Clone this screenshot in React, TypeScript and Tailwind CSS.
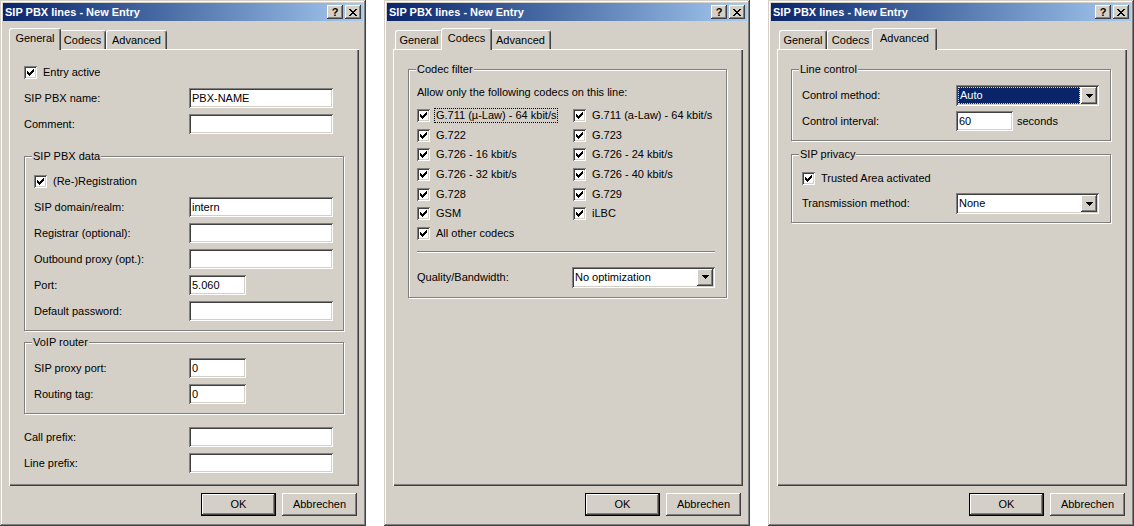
import { ReactNode } from "react";

// Win2000 style 3D edges
const windowEdge =
  "shadow-[inset_-1px_-1px_0_#404040,inset_1px_1px_0_#d4d0c8,inset_-2px_-2px_0_#808080,inset_2px_2px_0_#ffffff]";
const raised =
  "shadow-[inset_-1px_-1px_0_#404040,inset_1px_1px_0_#ffffff,inset_-2px_-2px_0_#808080,inset_2px_2px_0_#d4d0c8]";
const sunken =
  "shadow-[inset_1px_1px_0_#808080,inset_-1px_-1px_0_#ffffff,inset_2px_2px_0_#404040,inset_-2px_-2px_0_#d4d0c8]";
const panelEdge =
  "shadow-[inset_1px_1px_0_#ffffff,inset_-1px_-1px_0_#404040,inset_-2px_-2px_0_#808080]";

function CheckMark() {
  return (
    <svg width="7" height="7" viewBox="0 0 7 7" shapeRendering="crispEdges">
      <path
        d="M6 0h1v1h-1z M5 1h2v1h-2z M0 2h1v1h-1z M4 2h3v1h-3z M0 3h2v1h-2z M3 3h3v1h-3z M0 4h5v1h-5z M1 5h3v1h-3z M2 6h1v1h-1z"
        fill="#000"
      />
    </svg>
  );
}

function Arrow() {
  return (
    <svg width="7" height="4" viewBox="0 0 7 4" shapeRendering="crispEdges">
      <path d="M0 0h7v1h-7z M1 1h5v1h-5z M2 2h3v1h-3z M3 3h1v1h-1z" fill="#000" />
    </svg>
  );
}

function Checkbox({ label, focused }: { label: string; focused?: boolean }) {
  return (
    <div className="flex h-[13px] items-center gap-[6px]">
      <span className={`flex h-[13px] w-[13px] shrink-0 items-center justify-center bg-white ${sunken}`}>
        <CheckMark />
      </span>
      {focused ? (
        <span className="-ml-[2px] border border-dotted border-black px-[1px] leading-[13px]">{label}</span>
      ) : (
        <span className="whitespace-nowrap">{label}</span>
      )}
    </div>
  );
}

function TextBox({ value, width }: { value?: string; width: string }) {
  return (
    <div className={`flex h-[20px] items-center bg-white pl-[3px] ${sunken} ${width}`}>{value}</div>
  );
}

function Combo({ value, selected }: { value: string; selected?: boolean }) {
  return (
    <div className={`flex h-[21px] w-[143px] items-center gap-[1px] bg-white p-[2px] ${sunken}`}>
      {selected ? (
        <div className="flex h-[17px] flex-1 items-center border border-dotted border-[#d4d0c8] bg-[#0a246a] pl-[1px] text-white">
          {value}
        </div>
      ) : (
        <div className="flex-1 pl-[1px]">{value}</div>
      )}
      <div className={`flex h-[17px] w-[16px] items-center justify-center bg-[#d4d0c8] ${raised}`}>
        <Arrow />
      </div>
    </div>
  );
}

function Row({ label, labelW, children }: { label: string; labelW: string; children: ReactNode }) {
  return (
    <div className="flex items-center">
      <span className={`shrink-0 ${labelW}`}>{label}</span>
      {children}
    </div>
  );
}

function Group({ title, className, children }: { title: string; className: string; children: ReactNode }) {
  return (
    <div
      className={`relative flex flex-col border border-[#808080] shadow-[inset_1px_1px_0_#ffffff,1px_1px_0_#ffffff] ${className}`}
    >
      <span className="absolute -top-[7px] left-[7px] bg-[#d4d0c8] px-[1px] leading-[13px]">{title}</span>
      {children}
    </div>
  );
}

const tabs = [
  { name: "General", w: "w-[48px]", sw: "w-[52px]" },
  { name: "Codecs", w: "w-[47px]", sw: "w-[51px]" },
  { name: "Advanced", w: "w-[61px]", sw: "w-[65px]" },
];

function TabStrip({ active }: { active: number }) {
  return (
    <div className="relative z-10 mt-[7px] -mb-[1px] flex h-[22px] items-end pl-[8px]">
      {tabs.map((t, i) =>
        i === active ? (
          <div
            key={t.name}
            className={`relative z-10 -mx-[2px] flex h-[22px] items-center justify-center rounded-t-[3px] border-l border-r border-t border-white border-r-[#404040] bg-[#d4d0c8] pb-[3px] shadow-[inset_-1px_0_0_#808080] ${t.sw}`}
          >
            {t.name}
          </div>
        ) : (
          <div
            key={t.name}
            className={`mb-[1px] flex h-[19px] items-center justify-center rounded-t-[3px] border-l border-r border-t border-white border-r-[#404040] pt-[1px] shadow-[inset_-1px_0_0_#808080] ${t.w}`}
          >
            {t.name}
          </div>
        )
      )}
    </div>
  );
}

function TitleBar() {
  return (
    <div className="flex h-[18px] items-center bg-linear-to-r from-[#0a246a] to-[#a6caf0] pl-[2px] pr-[2px]">
      <span className="flex-1 font-bold text-white">SIP PBX lines - New Entry</span>
      <div className="flex gap-[2px]">
        <div className={`flex h-[14px] w-[16px] items-center justify-center bg-[#d4d0c8] text-[11px] font-bold leading-[14px] ${raised}`}>
          ?
        </div>
        <div className={`flex h-[14px] w-[16px] items-center justify-center bg-[#d4d0c8] ${raised}`}>
          <svg width="8" height="7" viewBox="0 0 8 7" shapeRendering="crispEdges">
            <path
              d="M0 0h2v1h-2z M6 0h2v1h-2z M1 1h2v1h-2z M5 1h2v1h-2z M2 2h4v1h-4z M3 3h2v1h-2z M2 4h4v1h-4z M1 5h2v1h-2z M5 5h2v1h-2z M0 6h2v1h-2z M6 6h2v1h-2z"
              fill="#000"
            />
          </svg>
        </div>
      </div>
    </div>
  );
}

function Dialog({ active, children }: { active: number; children: ReactNode }) {
  return (
    <div className={`flex h-[526px] w-[366px] shrink-0 flex-col bg-[#d4d0c8] p-[3px] ${windowEdge}`}>
      <TitleBar />
      <TabStrip active={active} />
      <div className={`ml-[6px] h-[437px] w-[350px] ${panelEdge}`}>{children}</div>
      <div className="mr-[6px] mt-[7px] flex justify-end gap-[6px]">
        <div className="flex h-[23px] w-[75px] items-center justify-center border border-black shadow-[inset_-1px_-1px_0_#404040,inset_1px_1px_0_#ffffff,inset_-2px_-2px_0_#808080]">
          OK
        </div>
        <div className={`flex h-[23px] w-[75px] items-center justify-center ${raised}`}>Abbrechen</div>
      </div>
    </div>
  );
}

const leftCodecs = ["G.711 (µ-Law) - 64 kbit/s", "G.722", "G.726 - 16 kbit/s", "G.726 - 32 kbit/s", "G.728", "GSM", "All other codecs"];
const rightCodecs = ["G.711 (a-Law) - 64 kbit/s", "G.723", "G.726 - 24 kbit/s", "G.726 - 40 kbit/s", "G.729", "iLBC", ""];

export default function App() {
  return (
    <div className="flex h-[526px] w-[1134px] gap-[18px] bg-white font-['Liberation_Sans',Arial,sans-serif] text-[11px] leading-[13px] text-black">
      {/* General */}
      <Dialog active={0}>
        <div className="flex flex-col pl-[15px] pt-[17px]">
          <Checkbox label="Entry active" />
          <div className="mt-[9px]">
            <Row label="SIP PBX name:" labelW="w-[165px]">
              <TextBox value="PBX-NAME" width="w-[144px]" />
            </Row>
          </div>
          <div className="mt-[6px]">
            <Row label="Comment:" labelW="w-[165px]">
              <TextBox width="w-[144px]" />
            </Row>
          </div>
          <Group title="SIP PBX data" className="mt-[22px] w-[320px] gap-[6px] pb-[9px] pl-[9px] pt-[18px]">
            <div className="mb-[3px]">
              <Checkbox label="(Re-)Registration" />
            </div>
            <Row label="SIP domain/realm:" labelW="w-[155px]">
              <TextBox value="intern" width="w-[144px]" />
            </Row>
            <Row label="Registrar (optional):" labelW="w-[155px]">
              <TextBox width="w-[144px]" />
            </Row>
            <Row label="Outbound proxy (opt.):" labelW="w-[155px]">
              <TextBox width="w-[144px]" />
            </Row>
            <Row label="Port:" labelW="w-[155px]">
              <TextBox value="5.060" width="w-[57px]" />
            </Row>
            <Row label="Default password:" labelW="w-[155px]">
              <TextBox width="w-[144px]" />
            </Row>
          </Group>
          <Group title="VoIP router" className="mt-[11px] w-[320px] gap-[6px] pb-[9px] pl-[9px] pt-[15px]">
            <Row label="SIP proxy port:" labelW="w-[155px]">
              <TextBox value="0" width="w-[57px]" />
            </Row>
            <Row label="Routing tag:" labelW="w-[155px]">
              <TextBox value="0" width="w-[57px]" />
            </Row>
          </Group>
          <div className="mt-[13px]">
            <Row label="Call prefix:" labelW="w-[165px]">
              <TextBox width="w-[144px]" />
            </Row>
          </div>
          <div className="mt-[6px]">
            <Row label="Line prefix:" labelW="w-[165px]">
              <TextBox width="w-[144px]" />
            </Row>
          </div>
        </div>
      </Dialog>

      {/* Codecs */}
      <Dialog active={1}>
        <div className="pl-[15px] pt-[20px]">
          <Group title="Codec filter" className="w-[319px] pb-[9px] pl-[8px] pt-[16px]">
            <div>Allow only the following codecs on this line:</div>
            <div className="mt-[10px] grid auto-rows-[19.67px] grid-cols-[156px_1fr]">
              {leftCodecs.map((c, i) => [
                <div key={`l${i}`}>
                  <Checkbox label={c} focused={i === 0} />
                </div>,
                <div key={`r${i}`}>{rightCodecs[i] && <Checkbox label={rightCodecs[i]} />}</div>,
              ])}
            </div>
            <div className="mt-[4px] h-0 w-[298px] border-b border-t border-b-white border-t-[#808080]" />
            <div className="mt-[14px]">
              <Row label="Quality/Bandwidth:" labelW="w-[155px]">
                <Combo value="No optimization" />
              </Row>
            </div>
          </Group>
        </div>
      </Dialog>

      {/* Advanced */}
      <Dialog active={2}>
        <div className="flex flex-col pl-[14px] pt-[20px]">
          <Group title="Line control" className="w-[320px] pb-[9px] pl-[10px] pt-[15px]">
            <Row label="Control method:" labelW="w-[154px]">
              <Combo value="Auto" selected />
            </Row>
            <div className="mt-[5px]">
              <Row label="Control interval:" labelW="w-[154px]">
                <TextBox value="60" width="w-[57px]" />
                <span className="ml-[4px]">seconds</span>
              </Row>
            </div>
          </Group>
          <Group title="SIP privacy" className="mt-[13px] w-[320px] pb-[8px] pl-[10px] pt-[17px]">
            <Checkbox label="Trusted Area activated" />
            <div className="mt-[8px]">
              <Row label="Transmission method:" labelW="w-[154px]">
                <Combo value="None" />
              </Row>
            </div>
          </Group>
        </div>
      </Dialog>
    </div>
  );
}
